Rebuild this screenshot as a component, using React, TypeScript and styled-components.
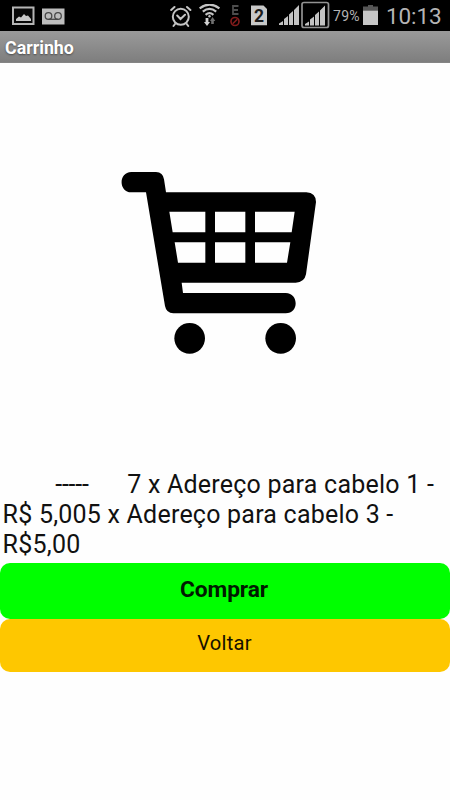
import React from "react";
import styled, { createGlobalStyle } from "styled-components";

const GlobalStyle = createGlobalStyle`
  * { box-sizing: border-box; }
  body { margin: 0; background: #fff; font-family: Roboto, "Liberation Sans", sans-serif; }
`;

const Screen = styled.main`
  display: flex;
  flex-direction: column;
  width: 450px;
  height: 800px;
  background: #fefefe;
  overflow: hidden;
`;

const StatusBar = styled.header`
  display: flex;
  align-items: flex-start;
  height: 31px;
  background: #000;
  color: #b4b4b4;
`;

const StatusIcon = styled.svg<{ $gap?: number; $top?: number }>`
  flex: none;
  display: block;
  margin-left: ${({ $gap = 0 }) => $gap}px;
  margin-top: ${({ $top = 0 }) => $top}px;
`;

const Battery = styled.span`
  width: 29px;
  margin: 8px 0 0 3px;
  font-size: 14px;
  line-height: 17px;
  letter-spacing: 0.3px;
  white-space: nowrap;
`;

const Clock = styled.time`
  margin: 3px 0 0 8px;
  font-size: 22.5px;
  line-height: 26px;
  letter-spacing: -0.1px;
  white-space: nowrap;
`;

const TitleBar = styled.h1`
  height: 32px;
  margin: 0;
  padding: 1px 0 0 5px;
  background: linear-gradient(#9a9a9a, #7e7e7e);
  border-bottom: 1px solid #858585;
  color: #fff;
  font-size: 17.8px;
  font-weight: 700;
  line-height: 32px;
  text-shadow: 0 1px 2px rgba(0, 0, 0, 0.45);
`;

const Picture = styled.section`
  display: flex;
  height: 406px;
  padding: 97px 0 0 110px;
`;

const Summary = styled.section`
  display: flex;
  flex-direction: column;
  height: 94px;
  padding: 1px 0 0 2.6px;
  color: #111;
  font-size: 25px;
  line-height: 30px;
`;

const Line = styled.div<{ $indent?: number; $track: number }>`
  display: flex;
  padding-left: ${({ $indent = 0 }) => $indent}px;
  letter-spacing: ${({ $track }) => $track}px;
  white-space: pre;
`;

const Dashes = styled.span`
  width: 72px;
  letter-spacing: -0.2px;
`;

const Button = styled.button<{ $primary?: boolean }>`
  width: 450px;
  height: ${({ $primary }) => ($primary ? 56 : 53)}px;
  padding: 0 ${({ $primary }) => ($primary ? 2 : 1)}px ${({ $primary }) => ($primary ? 4 : 5)}px 0;
  border: 0;
  border-radius: 10px;
  background: ${({ $primary }) => ($primary ? "#00ff00" : "#fec700")};
  color: ${({ $primary }) => ($primary ? "#001a00" : "#151000")};
  font-family: inherit;
  font-size: ${({ $primary }) => ($primary ? 22.8 : 20.2)}px;
  font-weight: ${({ $primary }) => ($primary ? 700 : 400)};
  letter-spacing: ${({ $primary }) => ($primary ? -0.1 : 0.2)}px;
`;

const SignalBars = () => (
  <path d="M0 21V19.5L4 17V21ZM5 21V15L9 12V21ZM10 21V10.5L14 7V21ZM15 21V6L20 1V21Z" fill="#c2c2c2" />
);

export default function App() {
  return (
    <Screen>
      <GlobalStyle />
      <StatusBar>
        <StatusIcon $gap={12} $top={6} width="23" height="20" viewBox="0 0 23 20">
          <rect x="1" y="1.5" width="20.5" height="16.5" fill="#080808" stroke="#b5b5b5" strokeWidth="2" />
          <path d="M4 15V13L7 10.5L9 11.5L12 8L14 10L16 9.5L19 13V15Z" fill="#c8c8c8" />
        </StatusIcon>
        <StatusIcon $gap={7} $top={8} width="23" height="17" viewBox="0 0 23 17">
          <rect width="22.5" height="16" y=".5" fill="#bdbdbd" />
          <g fill="none" stroke="#484848" strokeWidth="1.3">
            <circle cx="6.5" cy="8" r="3.3" />
            <circle cx="16" cy="8" r="3.3" />
            <path d="M6.5 11.3H16" />
          </g>
        </StatusIcon>
        <StatusIcon $gap={105} $top={5} width="22" height="23" viewBox="0 0 22 23">
          <g fill="none" stroke="#c4c4c4" strokeWidth="2" strokeLinecap="round">
            <circle cx="10.8" cy="11.8" r="8" />
            <path d="M7.2 10.5L10.5 14L15 9.8M1.2 5L4.5 2M17 2L20.4 5M5 19L3.5 21M16.8 19L18.2 21" />
          </g>
        </StatusIcon>
        <StatusIcon $gap={7} $top={4} width="23" height="23" viewBox="0 0 23 23">
          <g fill="none" stroke="#c4c4c4" strokeWidth="2.2">
            <path d="M.6 4.4Q10.5-3.2 20.4 4.4M3.8 7.7Q10.5 2.2 17.2 7.7M6.6 10.8Q10.5 7.4 14.4 10.8" />
          </g>
          <circle cx="10.5" cy="12.3" r="1.2" fill="#c4c4c4" />
          <path d="M6.6 14H9.4V18H11L8 22L5 18H6.6Z" fill="#d0d0d0" />
          <path d="M12.2 20V17H11L13.5 13L16.3 17H14.8V20Z" fill="#707070" />
        </StatusIcon>
        <StatusIcon $gap={8} $top={4} width="12" height="23" viewBox="0 0 12 23">
          <path d="M8.5 2H3V10H8.5M3 6H8" fill="none" stroke="#4d4d4d" strokeWidth="1.8" />
          <circle cx="5" cy="17.5" r="4" fill="none" stroke="#831c1c" strokeWidth="1.6" />
          <path d="M2.7 19.8L7.3 15.2" stroke="#831c1c" strokeWidth="1.6" />
        </StatusIcon>
        <StatusIcon $gap={9} $top={5} width="17" height="21" viewBox="0 0 17 21">
          <path d="M0 .5H12.5L16 4V20.3H0Z" fill="#c8c8c8" />
          <text x="8" y="16.7" textAnchor="middle" fill="#1b1b1b" fontFamily="Roboto, sans-serif" fontSize="17.5" fontWeight="700">2</text>
        </StatusIcon>
        <StatusIcon $gap={11} $top={4} width="21" height="23" viewBox="0 0 21 23"><SignalBars /></StatusIcon>
        <StatusIcon $gap={1} $top={1} width="29" height="28" viewBox="0 0 29 28">
          <rect x="1" y="1.5" width="26.5" height="25" rx="2" fill="none" stroke="#929292" strokeWidth="1.7" />
          <g transform="translate(4 3.5)"><SignalBars /></g>
        </StatusIcon>
        <Battery>79%</Battery>
        <StatusIcon $gap={1} $top={5} width="15" height="21" viewBox="0 0 15 21">
          <path d="M0 1.5H5V0H10V1.5H15V5.5H0Z" fill="#565656" />
          <path d="M0 5.5H15V20H0Z" fill="#c6c6c6" />
        </StatusIcon>
        <Clock>10:13</Clock>
      </StatusBar>
      <TitleBar>Carrinho</TitleBar>
      <Picture>
        <svg width="220" height="200" viewBox="0 0 660 600" role="img" aria-label="Carrinho">
          <path
            fillRule="evenodd"
            d="M64 36H138Q159 37 162 58L168 97H589Q618 99 618 126L588 343Q583 368 557 368H215L219 399H527C567 400 567 460 527 460H190Q169 459 165 438L108 97H64C25 96 25 37 64 36ZM178 155L188 217H286V155ZM315 155V217H406V155ZM435 155V217H545L554 155ZM194 247L204 308H286V247ZM315 247V308H406V247ZM435 247V308H531L541 247Z"
          />
          <circle cx="239" cy="535" r="46" />
          <circle cx="512" cy="535" r="46" />
        </svg>
      </Picture>
      <Summary>
        <Line $indent={52.6} $track={0.23}><Dashes>-----</Dashes>7 x Adereço para cabelo 1 -</Line>
        <Line $track={0.22}>R$ 5,005 x Adereço para cabelo 3 -</Line>
        <Line $track={0.23}>R$5,00</Line>
      </Summary>
      <Button $primary>Comprar</Button>
      <Button>Voltar</Button>
    </Screen>
  );
}
